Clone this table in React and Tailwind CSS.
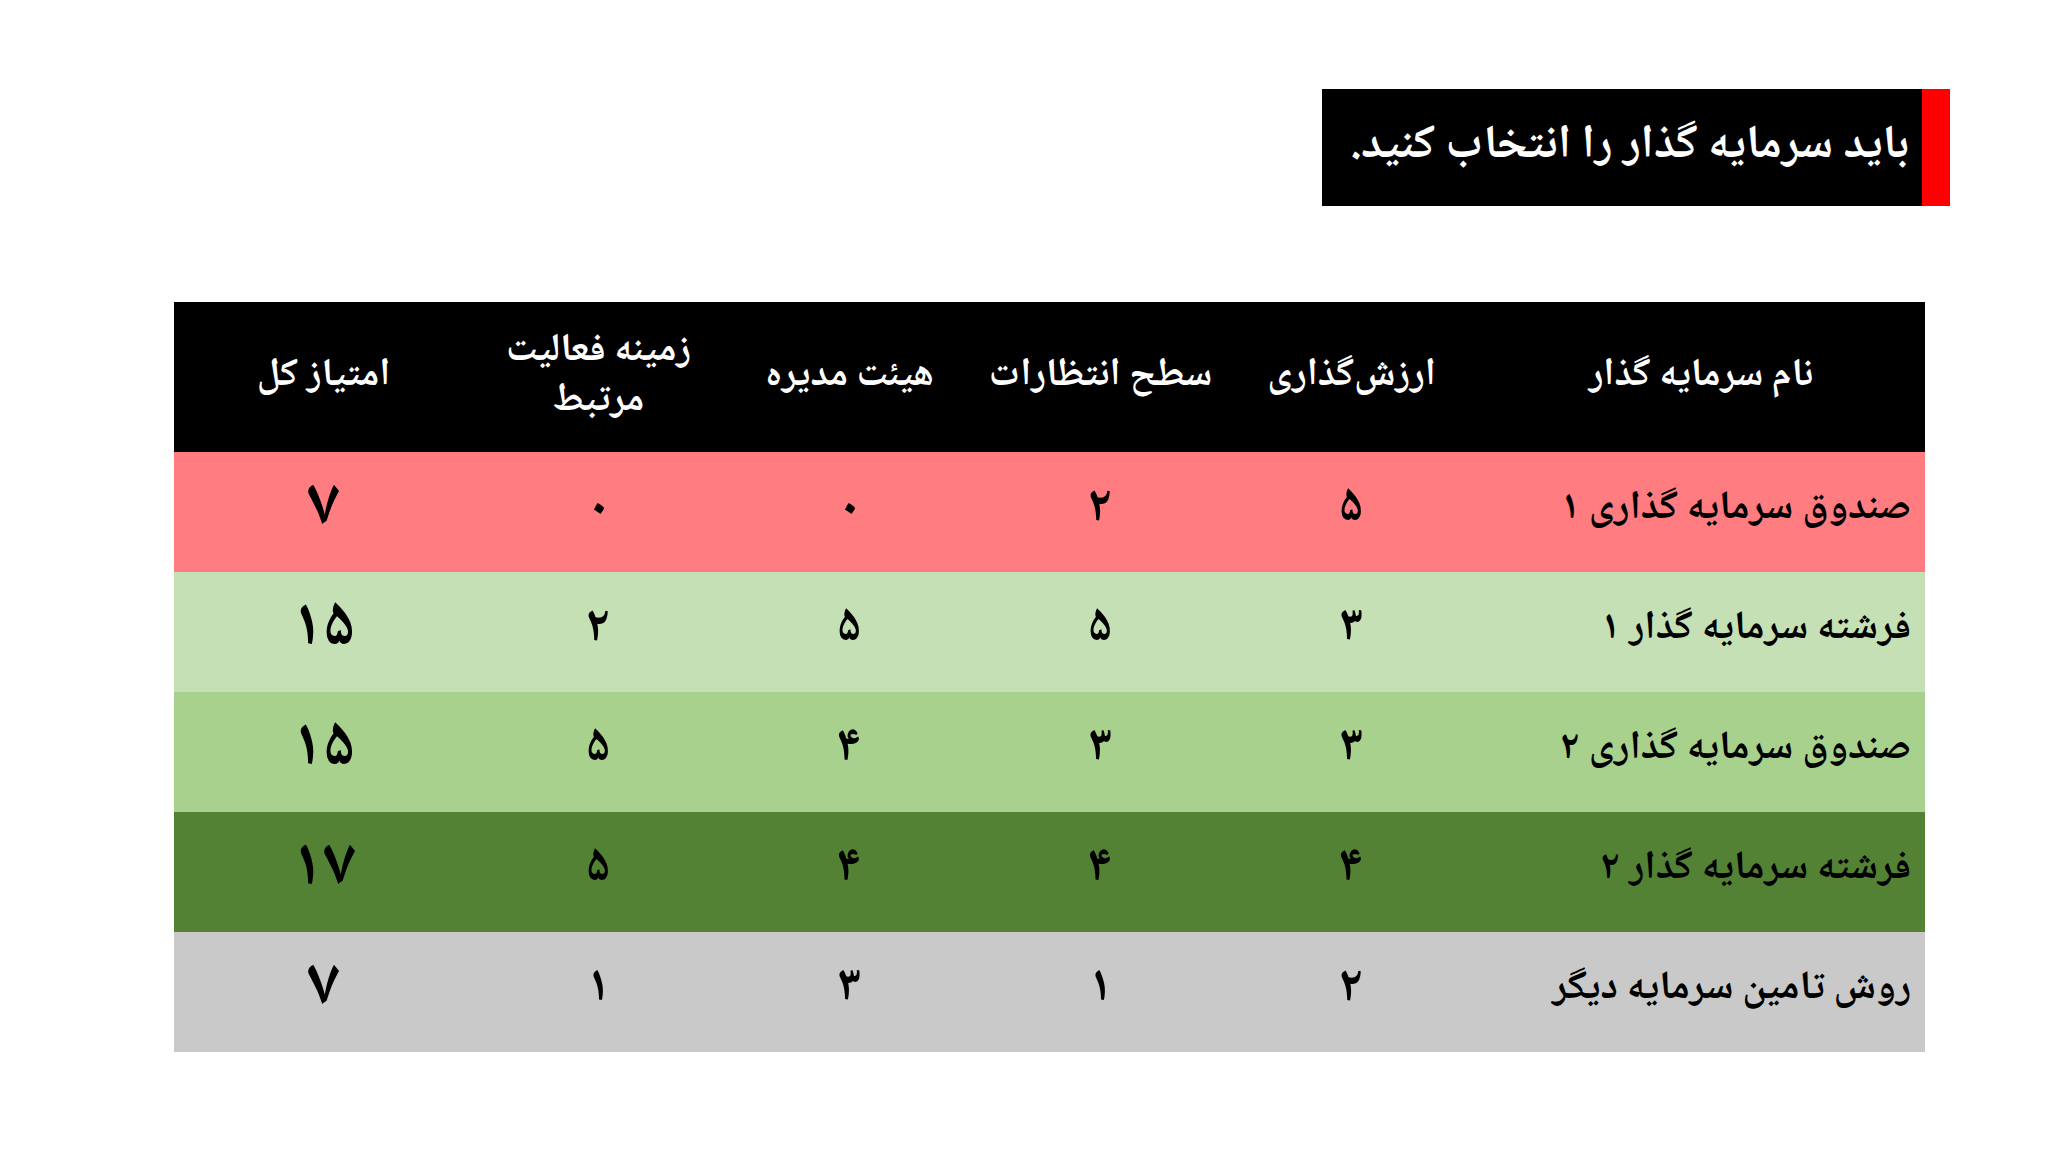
import React from 'react';

const rows = [
  { name: 'صندوق سرمایه گذاری ۱', vals: ['۵', '۲', '۰', '۰'], total: '۷', bg: 'bg-[#ff7c80]' },
  { name: 'فرشته سرمایه گذار ۱', vals: ['۳', '۵', '۵', '۲'], total: '۱۵', bg: 'bg-[#c5e0b4]' },
  { name: 'صندوق سرمایه گذاری ۲', vals: ['۳', '۳', '۴', '۵'], total: '۱۵', bg: 'bg-[#a9d18e]' },
  { name: 'فرشته سرمایه گذار ۲', vals: ['۴', '۴', '۴', '۵'], total: '۱۷', bg: 'bg-[#548235]' },
  { name: 'روش تامین سرمایه دیگر', vals: ['۲', '۱', '۳', '۱'], total: '۷', bg: 'bg-[#c9c9c9]' },
];

const font = "font-['Noto_Naskh_Arabic','DejaVu_Sans',sans-serif]";

export default function App() {
  return (
    <div className={`w-[2048px] h-[1152px] bg-white flex flex-col ${font}`}>
      {/* Title */}
      <div className="flex justify-end pt-[89px] pr-[98px]">
        <div dir="rtl" className="w-[628px] h-[117px] bg-black flex">
          <div className="w-[28px] h-full bg-[#ff0000]" />
          <div className="flex items-center pr-[13px] text-white font-bold text-[47px] leading-none">
            باید سرمایه گذار را انتخاب کنید.
          </div>
        </div>
      </div>

      {/* Table */}
      <div dir="rtl" className="mt-[96px] ml-[174px] w-[1751px] flex flex-col">
        <div className="grid grid-cols-[448px_251px_251px_251px_251px_299px] h-[150px] bg-black text-white font-bold text-[39px] leading-[46px]">
          <div className="flex items-center justify-center">نام سرمایه گذار</div>
          <div className="flex items-center justify-center">ارزش‌گذاری</div>
          <div className="flex items-center justify-center">سطح انتظارات</div>
          <div className="flex items-center justify-center">هیئت مدیره</div>
          <div className="flex flex-col items-center justify-center leading-[50px]">
            <span>زمینه فعالیت</span>
            <span>مرتبط</span>
          </div>
          <div className="flex items-center justify-center">امتیاز کل</div>
        </div>
        {rows.map((r) => (
          <div
            key={r.name}
            className={`grid grid-cols-[448px_251px_251px_251px_251px_299px] h-[120px] ${r.bg} text-black font-bold`}
          >
            <div className="flex items-center justify-start pr-[14px] pb-[6px] text-[40px]">{r.name}</div>
            {r.vals.map((v, i) => (
              <div key={i} className="flex items-center justify-center pb-[6px] text-[50px]">{v}</div>
            ))}
            <div className="flex items-center justify-center pb-[6px] text-[66px]">{r.total}</div>
          </div>
        ))}
      </div>
    </div>
  );
}
